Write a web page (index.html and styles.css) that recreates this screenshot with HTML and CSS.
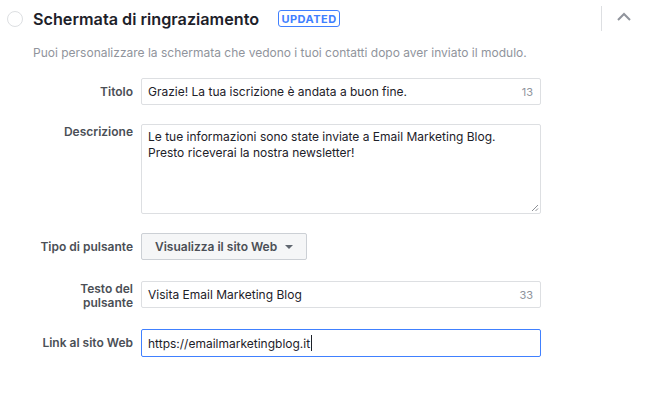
FILE: index.html
```html
<!doctype html>
<html lang="it">
  <head>
    <meta charset="UTF-8" />
    <meta name="viewport" content="width=device-width, initial-scale=1.0" />
    <title>Schermata di ringraziamento</title>
    <link rel="stylesheet" href="styles.css">
  </head>

  <body>
    <div class="section">
      <div class="section-header">
        <div class="step-circle"></div>
        <div class="section-title">Schermata di ringraziamento</div>
        <div class="badge">UPDATED</div>
        <div class="header-spacer"></div>
        <div class="divider"></div>
        <div class="toggle">
          <svg width="16" height="10" viewBox="0 0 16 10">
            <path d="M2 8 L8 2 L14 8" fill="none" stroke="#90949c" stroke-width="2" />
          </svg>
        </div>
      </div>

      <div class="section-desc">Puoi personalizzare la schermata che vedono i tuoi contatti dopo aver inviato il modulo.</div>

      <div class="form">
        <div class="form-row">
          <div class="form-label">Titolo</div>
          <div class="field">
            <span class="field-text">Grazie! La tua iscrizione è andata a buon fine.</span>
            <span class="field-count">13</span>
          </div>
        </div>

        <div class="form-row">
          <div class="form-label form-label-top">Descrizione</div>
          <div class="field field-area">
            <span class="field-text">Le tue informazioni sono state inviate a Email Marketing Blog.<br>Presto riceverai la nostra newsletter!</span>
            <svg class="grip" width="8" height="8" viewBox="0 0 8 8">
              <path d="M7 1 L1 7 M7 4.5 L4.5 7" stroke="#8d9096" stroke-width="1" />
            </svg>
          </div>
        </div>

        <div class="form-row">
          <div class="form-label">Tipo di pulsante</div>
          <div class="select-button">
            <span>Visualizza il sito Web</span>
            <span class="caret"></span>
          </div>
        </div>

        <div class="form-row">
          <div class="form-label form-label-two">Testo del<br>pulsante</div>
          <div class="field">
            <span class="field-text">Visita Email Marketing Blog</span>
            <span class="field-count">33</span>
          </div>
        </div>

        <div class="form-row">
          <div class="form-label">Link al sito Web</div>
          <div class="field field-focus">
            <span class="field-text">https://emailmarketingblog.it</span>
            <span class="text-cursor"></span>
          </div>
        </div>
      </div>
    </div>
  </body>
</html>
```

FILE: styles.css
```css
html,
body {
  margin: 0;
  padding: 0;
  background-color: #fff;
}

body {
  font-family: Inter, "Liberation Sans", Arial, sans-serif;
  color: #1d2129;
}

.section {
  width: 646px;
}

.section-header {
  height: 37px;
  display: flex;
  align-items: center;
  padding-left: 7px;
  box-sizing: border-box;
}

.step-circle {
  width: 14px;
  height: 14px;
  border: 1px solid #dddfe2;
  border-radius: 50%;
  margin-right: 10px;
}

.section-title {
  font-size: 16.2px;
  font-weight: 600;
  color: #1d2129;
}

.badge {
  margin-left: 19px;
  height: 15px;
  width: 60px;
  border: 1px solid #4080ff;
  border-radius: 3px;
  color: #4080ff;
  font-size: 11px;
  font-weight: 700;
  letter-spacing: 0.5px;
  display: flex;
  align-items: center;
  justify-content: center;
}

.header-spacer {
  flex: 1;
}

.divider {
  width: 1px;
  height: 25px;
  background-color: #dddfe2;
  align-self: flex-start;
  margin-top: 6px;
}

.toggle {
  width: 44px;
  display: flex;
  justify-content: center;
  padding-bottom: 4px;
}

.section-desc {
  padding-left: 33px;
  margin-top: 8px;
  font-size: 12px;
  line-height: 16px;
  color: #90949c;
}

.form {
  margin-top: 17px;
}

.form-row {
  display: flex;
  align-items: flex-start;
  margin-bottom: 19px;
}

.form-label {
  width: 133px;
  margin-right: 8px;
  text-align: right;
  font-size: 12px;
  font-weight: 600;
  line-height: 16px;
  padding-top: 6px;
  color: #4b4f56;
  flex: none;
}

.form-label-top {
  padding-top: 0;
}

.form-label-two {
  padding-top: 1px;
  line-height: 14px;
}

.field {
  position: relative;
  width: 400px;
  height: 27px;
  box-sizing: border-box;
  border: 1px solid #dddfe2;
  border-radius: 2px;
  display: flex;
  align-items: center;
  padding: 0 7px 0 6px;
  font-size: 12px;
}

.field-text {
  flex: 1;
  color: #1d2129;
}

.field-count {
  color: #90949c;
  font-size: 11px;
}

.field-area {
  height: 90px;
  align-items: flex-start;
  padding-top: 4px;
  line-height: 16px;
}

.grip {
  position: absolute;
  right: 1px;
  bottom: 1px;
}

.select-button {
  width: 166px;
  height: 27px;
  box-sizing: border-box;
  border: 1px solid #ccd0d5;
  border-radius: 2px;
  background-color: #f5f6f7;
  display: flex;
  align-items: center;
  padding-left: 13px;
  font-size: 12px;
  font-weight: 600;
  color: #4b4f56;
  margin-bottom: 2px;
}

.caret {
  margin-left: 8px;
  width: 0;
  height: 0;
  border-left: 4px solid transparent;
  border-right: 4px solid transparent;
  border-top: 4px solid #606770;
}

.field-focus {
  height: 28px;
  border-color: #4080ff;
}

.field-focus .field-text {
  flex: none;
}

.text-cursor {
  width: 1px;
  height: 16px;
  background-color: #1d2129;
  margin-left: 1px;
}
```
